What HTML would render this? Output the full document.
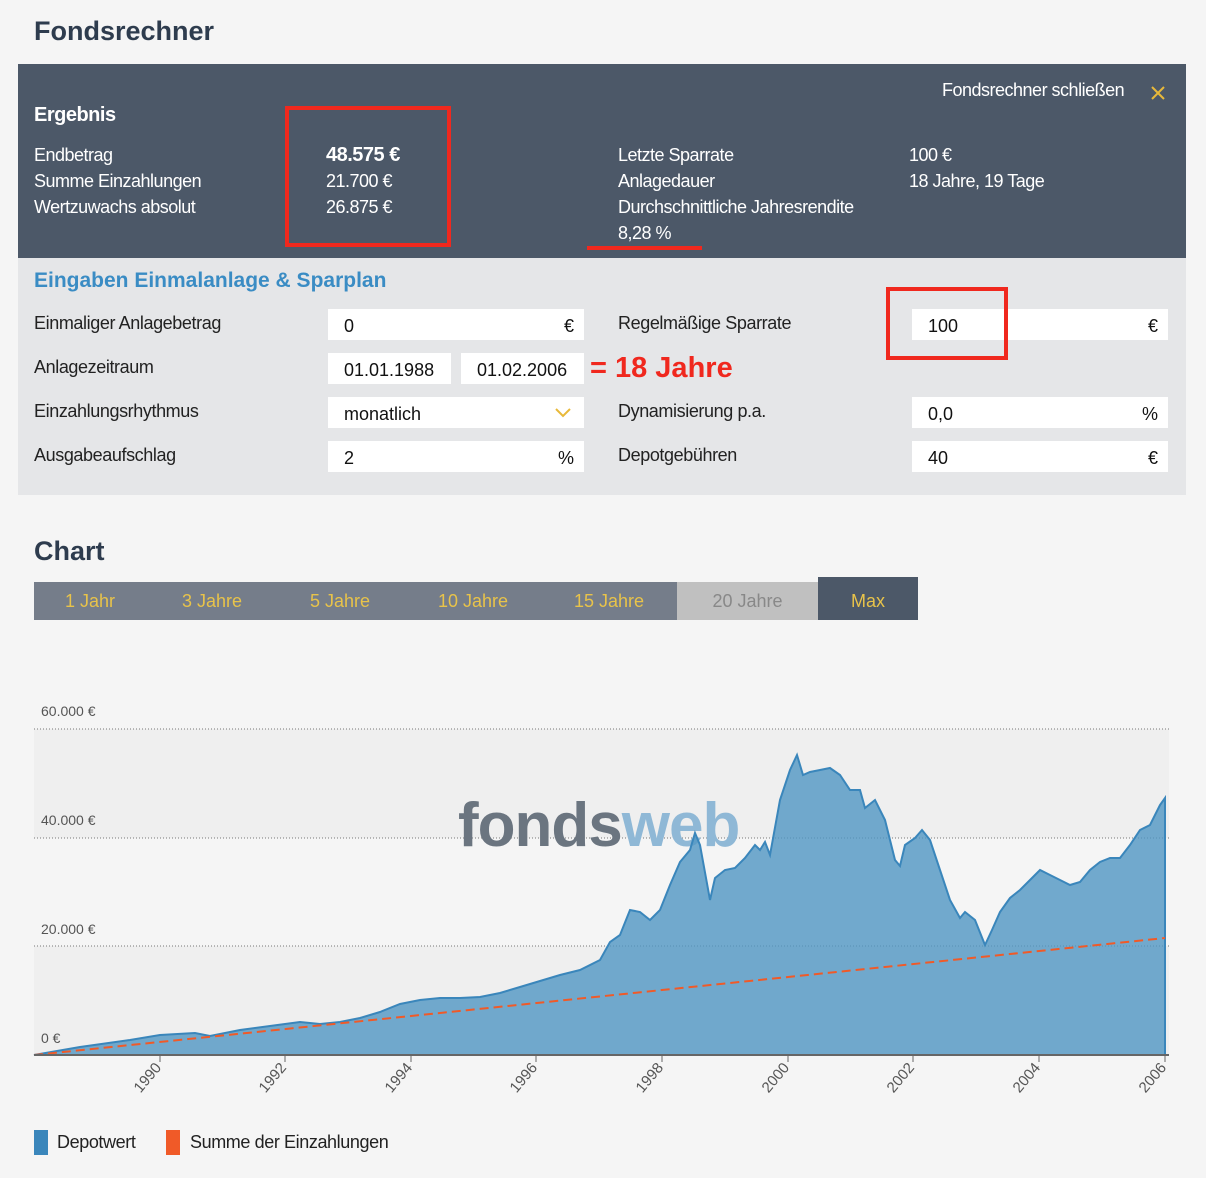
<!DOCTYPE html><html><head><meta charset="utf-8"><style>
*{margin:0;padding:0;box-sizing:border-box}
body{width:1206px;height:1178px;background:#f5f5f5;font-family:"Liberation Sans",sans-serif;position:relative;overflow:hidden;color:#222}
.a{position:absolute;white-space:nowrap}
.w{color:#fff;font-size:18px;letter-spacing:-0.5px}
.l{font-size:18px;letter-spacing:-0.4px;color:#222}
.in{position:absolute;background:#fff;height:31px;font-size:18px;padding:7px 16px;color:#111}
.in span{position:absolute;right:10px;top:7px}
.tab{position:absolute;top:582px;height:38px;font-size:18px;color:#e8c34a;padding-top:9px;text-align:center}
</style></head><body>
<div class="a" style="left:34px;top:16px;font-size:27px;font-weight:bold;color:#2e3c4e">Fondsrechner</div>
<div class="a" style="left:18px;top:64px;width:1168px;height:194px;background:#4c5868"></div>
<div class="a w" style="left:942px;top:80px">Fondsrechner schließen</div>
<svg class="a" style="left:1150px;top:85px" width="16" height="16"><path d="M2 2 L14 14 M14 2 L2 14" stroke="#e8b93a" stroke-width="2"/></svg>
<div class="a w" style="left:34px;top:104px;font-size:20px;font-weight:bold">Ergebnis</div>
<div class="a w" style="left:34px;top:142px;line-height:26px">Endbetrag<br>Summe Einzahlungen<br>Wertzuwachs absolut</div>
<div class="a w" style="left:326px;top:142px;line-height:26px"><b style="font-size:20px">48.575 €</b><br>21.700 €<br>26.875 €</div>
<div class="a w" style="left:618px;top:142px;line-height:26px">Letzte Sparrate<br>Anlagedauer<br>Durchschnittliche Jahresrendite<br>8,28 %</div>
<div class="a w" style="left:909px;top:142px;line-height:26px">100 €<br>18 Jahre, 19 Tage</div>
<div class="a" style="left:285px;top:106px;width:166px;height:141px;border:4px solid #f0281e"></div>
<div class="a" style="left:587px;top:246px;width:115px;height:4px;background:#f0281e"></div>
<div class="a" style="left:18px;top:258px;width:1168px;height:237px;background:#e5e6e8"></div>
<div class="a" style="left:34px;top:269px;font-size:21px;font-weight:bold;color:#3a8cc4">Eingaben Einmalanlage &amp; Sparplan</div>
<div class="a l" style="left:34px;top:313px">Einmaliger Anlagebetrag</div>
<div class="a l" style="left:34px;top:357px">Anlagezeitraum</div>
<div class="a l" style="left:34px;top:401px">Einzahlungsrhythmus</div>
<div class="a l" style="left:34px;top:445px">Ausgabeaufschlag</div>
<div class="a l" style="left:618px;top:313px">Regelmäßige Sparrate</div>
<div class="a l" style="left:618px;top:401px">Dynamisierung p.a.</div>
<div class="a l" style="left:618px;top:445px">Depotgebühren</div>
<div class="in" style="left:328px;top:309px;width:256px">0<span>€</span></div>
<div class="in" style="left:328px;top:353px;width:123px">01.01.1988</div>
<div class="in" style="left:461px;top:353px;width:123px">01.02.2006</div>
<div class="in" style="left:328px;top:397px;width:256px">monatlich<svg style="position:absolute;right:12px;top:10px" width="18" height="12"><path d="M2 2 L9 9 L16 2" stroke="#e8b93a" stroke-width="2" fill="none"/></svg></div>
<div class="in" style="left:328px;top:441px;width:256px">2<span>%</span></div>
<div class="in" style="left:912px;top:309px;width:256px">100<span>€</span></div>
<div class="in" style="left:912px;top:397px;width:256px">0,0<span>%</span></div>
<div class="in" style="left:912px;top:441px;width:256px">40<span>€</span></div>
<div class="a" style="left:590px;top:352px;font-size:29px;font-weight:bold;color:#f0281e">= 18 Jahre</div>
<div class="a" style="left:886px;top:287px;width:122px;height:73px;border:4px solid #f0281e"></div>
<div class="a" style="left:34px;top:536px;font-size:27px;font-weight:bold;color:#2e3c4e">Chart</div>
<div class="a" style="left:34px;top:582px;width:643px;height:38px;background:#757d8a"></div>
<div class="tab" style="left:34px;width:112px">1 Jahr</div>
<div class="tab" style="left:150px;width:124px">3 Jahre</div>
<div class="tab" style="left:280px;width:120px">5 Jahre</div>
<div class="tab" style="left:410px;width:126px">10 Jahre</div>
<div class="tab" style="left:546px;width:126px">15 Jahre</div>
<div class="tab" style="left:677px;width:141px;background:#c0c0c0;color:#888">20 Jahre</div>
<div class="tab" style="left:818px;top:577px;height:43px;padding-top:14px;width:100px;background:#4c5868">Max</div>
<svg class="a" style="left:0;top:0" width="1206" height="1178">
<rect x="34" y="729" width="1135" height="109" fill="#efefef"/>
<rect x="34" y="946" width="1135" height="109" fill="#efefef"/>
<g stroke="#777" stroke-dasharray="1,2" stroke-width="1"><line x1="34" y1="729" x2="1169" y2="729"/><line x1="34" y1="838" x2="1169" y2="838"/><line x1="34" y1="946" x2="1169" y2="946"/></g>
<text x="458" y="846" font-family="Liberation Sans" font-weight="bold" font-size="62" fill="#6b7580" letter-spacing="-1">fonds<tspan fill="#8fb8d6">web</tspan></text>
<path d="M34,1055 L80,1047 130,1040 160,1035 195,1033 210,1036 240,1030 270,1026 300,1022 320,1024 340,1022 360,1018 380,1012 400,1004 420,1000 440,998 460,998 480,997 500,993 520,987 540,981 560,975 580,970 600,960 610,942 620,935 630,910 640,912 650,920 660,910 670,885 680,862 690,850 695,833 700,845 710,900 715,878 725,870 735,868 745,858 755,845 760,850 765,842 770,855 780,800 790,770 797,755 803,775 810,772 820,770 830,768 840,775 850,790 860,790 865,808 875,800 885,820 895,860 900,866 905,845 915,838 922,830 930,840 940,870 950,900 960,918 965,912 975,920 985,945 992,930 1000,912 1010,898 1020,890 1030,880 1040,870 1050,875 1060,880 1070,885 1080,882 1090,870 1100,862 1110,858 1120,858 1130,845 1140,830 1150,825 1160,805 1165,798 L1165,1055 Z" fill="rgba(80,150,195,0.8)" stroke="#3a86bb" stroke-width="2"/>
<line x1="34" y1="1055" x2="1165" y2="938" stroke="#f05a28" stroke-width="2" stroke-dasharray="9,5"/>
<line x1="34" y1="1055" x2="1169" y2="1055" stroke="#666" stroke-width="2"/>
<g stroke="#666"><line x1="160" y1="1055" x2="160" y2="1062"/><line x1="285" y1="1055" x2="285" y2="1062"/><line x1="411" y1="1055" x2="411" y2="1062"/><line x1="536" y1="1055" x2="536" y2="1062"/><line x1="662" y1="1055" x2="662" y2="1062"/><line x1="788" y1="1055" x2="788" y2="1062"/><line x1="913" y1="1055" x2="913" y2="1062"/><line x1="1039" y1="1055" x2="1039" y2="1062"/><line x1="1165" y1="1055" x2="1165" y2="1062"/></g>
<g font-family="Liberation Sans" font-size="14" fill="#555">
<text x="41" y="716">60.000 €</text><text x="41" y="825">40.000 €</text><text x="41" y="934">20.000 €</text><text x="41" y="1043">0 €</text>
</g>
<g font-family="Liberation Sans" font-size="15" fill="#555">
<text transform="translate(162,1068) rotate(-50)" text-anchor="end">1990</text>
<text transform="translate(287,1068) rotate(-50)" text-anchor="end">1992</text>
<text transform="translate(413,1068) rotate(-50)" text-anchor="end">1994</text>
<text transform="translate(538,1068) rotate(-50)" text-anchor="end">1996</text>
<text transform="translate(664,1068) rotate(-50)" text-anchor="end">1998</text>
<text transform="translate(790,1068) rotate(-50)" text-anchor="end">2000</text>
<text transform="translate(915,1068) rotate(-50)" text-anchor="end">2002</text>
<text transform="translate(1041,1068) rotate(-50)" text-anchor="end">2004</text>
<text transform="translate(1167,1068) rotate(-50)" text-anchor="end">2006</text>
</g>
<rect x="34" y="1130" width="14" height="25" fill="#3a86bb"/>
<rect x="166" y="1130" width="14" height="25" fill="#f05a28"/>
</svg>
<div class="a l" style="left:57px;top:1132px">Depotwert</div>
<div class="a l" style="left:190px;top:1132px">Summe der Einzahlungen</div>
</body></html>
